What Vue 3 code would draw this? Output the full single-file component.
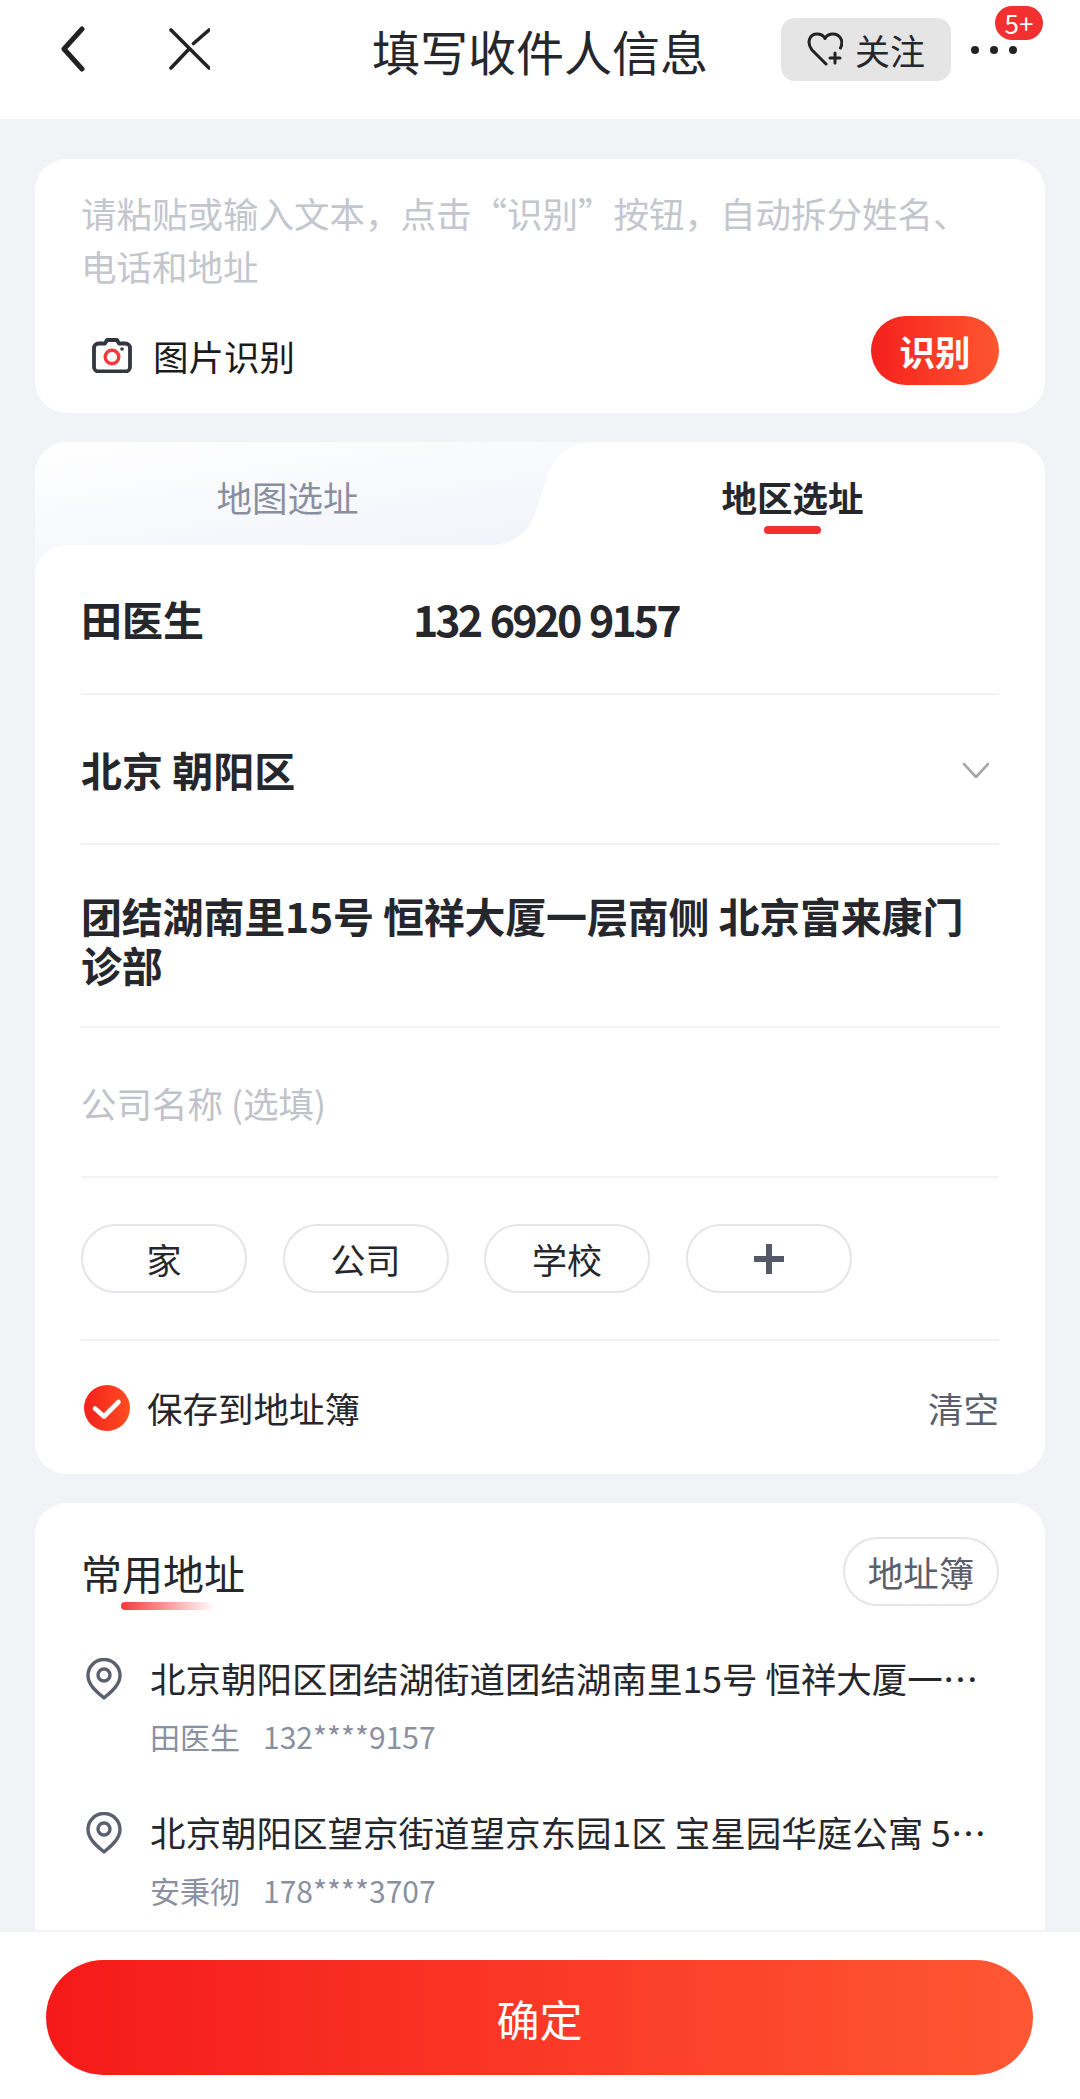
<template>
  <div class="page">
    <header class="topbar">
      <div class="nav-left">
        <svg class="icon-back" width="24" height="46" viewBox="0 0 24 46">
          <path d="M21 3 3 23l18 20" fill="none" stroke="#222" stroke-width="5" stroke-linecap="round" stroke-linejoin="round" />
        </svg>
        <svg class="icon-close" width="42" height="42" viewBox="0 0 42 42">
          <path d="M3 2 41 40M3 40 21 21M25.500 15.500 41 2" fill="none" stroke="#222" stroke-width="3.600" stroke-linecap="round" />
        </svg>
      </div>
      <h1 class="title">填写收件人信息</h1>
      <div class="nav-right">
        <div class="follow">
          <svg width="36" height="36" viewBox="0 0 36 36">
            <path d="M19 33 5 19C-1 11 3 3 10 3c3.500 0 6.500 1.500 8 4.500C19.500 4.500 22.500 3 26 3c7 0 11 7 7.500 14" fill="none" stroke="#222" stroke-width="3" stroke-linecap="round" stroke-linejoin="round" />
            <path d="M23 27h10M28 22v10" fill="none" stroke="#222" stroke-width="3" stroke-linecap="round" />
          </svg>
          <span>关注</span>
        </div>
        <div class="more">
          <i></i><i></i><i></i>
          <span class="badge">5+</span>
        </div>
      </div>
    </header>

    <main class="content">
      <section class="card paste">
        <p class="paste-hint">请粘贴或输入文本，点击“识别”按钮，自动拆分姓名、电话和地址</p>
        <div class="paste-actions">
          <div class="photo">
            <svg width="40" height="36" viewBox="0 0 40 36">
              <path d="M13 6.500 15 3h10l2 3.500h6.500a4.500 4.500 0 0 1 4.500 4.500v19a4.500 4.500 0 0 1-4.500 4.500h-27A4.500 4.500 0 0 1 2 30V11a4.500 4.500 0 0 1 4.500-4.500z" fill="none" stroke="#34363f" stroke-width="3.800" stroke-linejoin="round" />
              <circle cx="20" cy="20" r="6.800" fill="none" stroke="#f23a3a" stroke-width="3.400" />
              <circle cx="30" cy="12" r="1.800" fill="#34363f" />
            </svg>
            <span>图片识别</span>
          </div>
          <button class="recognize">识别</button>
        </div>
      </section>

      <section class="card address">
        <svg class="tab-shape" width="560" height="140" viewBox="0 0 560 140">
          <defs>
            <linearGradient id="tabFill" x1="0" y1="0" x2="0.6" y2="1">
              <stop offset="0" stop-color="#ffffff" />
              <stop offset="1" stop-color="#f1f3fa" />
            </linearGradient>
          </defs>
          <path d="M0 0H555C530 3 516 18 511 38L500 72C494 90 478 103 455 103H40V140H0Z" fill="url(#tabFill)" />
        </svg>
        <div class="tabs">
          <div class="tab">地图选址</div>
          <div class="tab active">地区选址</div>
        </div>
        <div class="form">
          <div class="row contact">
            <span class="contact-name">田医生</span>
            <span class="contact-phone">132 6920 9157</span>
          </div>
          <div class="row region">
            <span>北京 朝阳区</span>
            <svg class="chevron" width="28" height="18" viewBox="0 0 28 18">
              <path d="M2 2 14 15 26 2" fill="none" stroke="#a5a8af" stroke-width="2.600" stroke-linecap="round" stroke-linejoin="round" />
            </svg>
          </div>
          <div class="row detail">团结湖南里15号 恒祥大厦一层南侧 北京富来康门诊部</div>
          <div class="row company">公司名称 (选填)</div>
          <div class="row labels">
            <span v-for="label in labels" :key="label" class="chip">{{ label }}</span>
            <span class="chip">
              <svg width="30" height="30" viewBox="0 0 30 30">
                <path d="M0 15h30M15 0v30" stroke="#555869" stroke-width="6" />
              </svg>
            </span>
          </div>
          <div class="row save">
            <div class="save-left">
              <svg width="46" height="46" viewBox="0 0 46 46">
                <defs>
                  <linearGradient id="checkFill" x1="0" y1="0" x2="1" y2="0">
                    <stop offset="0" stop-color="#f5201c" />
                    <stop offset="1" stop-color="#ff4d22" />
                  </linearGradient>
                </defs>
                <circle cx="23" cy="23" r="23" fill="url(#checkFill)" />
                <path d="M11 23.500 20 31.500 34.500 17" fill="none" stroke="#fff" stroke-width="4.600" stroke-linecap="round" stroke-linejoin="round" />
              </svg>
              <span>保存到地址簿</span>
            </div>
            <span class="clear">清空</span>
          </div>
        </div>
      </section>

      <section class="card recent">
        <div class="recent-head">
          <h2 class="recent-title">常用地址</h2>
          <span class="book">地址簿</span>
        </div>
        <div v-for="item in recent" :key="item.phone" class="recent-item">
          <svg class="pin" width="36" height="42" viewBox="0 0 36 42">
            <path d="M18 40C11 34 2 27 2 17.500A16 16 0 0 1 34 17.500C34 27 25 34 18 40Z" fill="none" stroke="#5b5f6e" stroke-width="3.400" stroke-linejoin="round" />
            <circle cx="18" cy="17" r="6" fill="none" stroke="#5b5f6e" stroke-width="3.400" />
          </svg>
          <div class="recent-text">
            <div class="recent-addr">{{ item.address }}</div>
            <div class="recent-meta"><span>{{ item.name }}</span><span>{{ item.phone }}</span></div>
          </div>
        </div>
      </section>
    </main>

    <footer class="footer">
      <button class="confirm">确定</button>
    </footer>
  </div>
</template>

<script setup>
const labels = ['家', '公司', '学校']

const recent = [
  { address: '北京朝阳区团结湖街道团结湖南里15号 恒祥大厦一层南侧 北京富来康门诊部', name: '田医生', phone: '132****9157' },
  { address: '北京朝阳区望京街道望京东园1区 宝星园华庭公寓 5号楼2单元301室', name: '安秉彻', phone: '178****3707' },
]
</script>

<style>
body {
  margin: 0;
  background: #f2f3f7;
}
</style>

<style scoped>
.page {
  display: flex;
  flex-direction: column;
  width: 1080px;
  height: 2099px;
  overflow: hidden;
  font-family: "Noto Sans CJK SC", "Noto Sans", sans-serif;
  color: #26272c;
}

.topbar {
  flex: none;
  display: grid;
  grid-template-columns: 1fr auto 1fr;
  align-items: center;
  height: 119px;
  padding-bottom: 19px;
  box-sizing: border-box;
  background: #fff;
}
.nav-left {
  display: flex;
  align-items: center;
  margin-bottom: 2px;
  padding-left: 61px;
  gap: 83px;
}
.title {
  margin: 0;
  font-size: 48px;
  font-weight: 400;
  line-height: 70px;
}
.nav-right {
  display: flex;
  align-items: center;
  justify-content: flex-end;
  padding-right: 63px;
}
.follow {
  display: flex;
  align-items: center;
  gap: 12px;
  height: 63px;
  margin-bottom: 2px;
  padding: 0 26px;
  border-radius: 14px;
  background: #e5e5e5;
  font-size: 35px;
}
.more {
  position: relative;
  display: flex;
  gap: 11px;
  margin-left: 20px;
}
.more i {
  width: 8px;
  height: 8px;
  border-radius: 50%;
  background: #222;
}
.badge {
  position: absolute;
  left: 24px;
  top: -40px;
  width: 48px;
  height: 34px;
  border-radius: 17px;
  background: #f23030;
  color: #fff;
  font-size: 26px;
  line-height: 34px;
  text-align: center;
}

.content {
  flex: 1;
  min-height: 0;
  overflow: hidden;
  display: flex;
  flex-direction: column;
  gap: 29px;
  padding: 40px 35px 0;
}
.card {
  flex: none;
  border-radius: 32px;
  background: #fff;
}

.paste {
  display: flex;
  flex-direction: column;
  height: 254px;
  padding: 27px 46px 28px;
  box-sizing: border-box;
}
.paste-hint {
  margin: 0;
  font-size: 35.500px;
  line-height: 53px;
  color: #c3c6cd;
}
.paste-actions {
  margin-top: auto;
  display: flex;
  align-items: center;
  justify-content: space-between;
}
.photo {
  display: flex;
  align-items: center;
  gap: 21px;
  margin-top: 9px;
  padding-left: 11px;
  font-size: 35.500px;
  color: #1b1b1d;
}
.recognize {
  width: 128px;
  height: 69px;
  border: 0;
  border-radius: 35px;
  background: linear-gradient(90deg, #f5201c, #ff5630);
  color: #fff;
  font: 700 35.500px "Noto Sans CJK SC", sans-serif;
}

.address {
  position: relative;
  height: 1032px;
  overflow: hidden;
}
.tab-shape {
  position: absolute;
  left: 0;
  top: 0;
}
.tabs {
  position: relative;
  display: grid;
  grid-template-columns: 505px 505px;
  height: 103px;
}
.tab {
  padding-top: 30px;
  text-align: center;
  font-size: 35.500px;
  line-height: 50px;
  color: #8a8f9f;
}
.tab.active {
  position: relative;
  font-weight: 700;
  color: #26272c;
}
.tab.active::after {
  content: "";
  position: absolute;
  left: 224px;
  top: 84px;
  width: 57px;
  height: 8px;
  border-radius: 4px;
  background: #f23030;
}
.form {
  position: relative;
  padding: 0 46px;
  border-top-left-radius: 32px;
  background: #fff;
}
.row {
  border-bottom: 2px solid #f3f3f6;
  box-sizing: border-box;
}
.contact {
  display: flex;
  align-items: center;
  height: 150px;
  padding-bottom: 2px;
  font-size: 41px;
  font-weight: 700;
}
.contact-name {
  width: 332px;
}
.contact-phone {
  margin-bottom: 1px;
  font-size: 43px;
  letter-spacing: -3px;
  word-spacing: 3px;
}
.region {
  display: flex;
  align-items: center;
  justify-content: space-between;
  height: 150px;
  padding-right: 9px;
  font-size: 41px;
  font-weight: 700;
}
.chevron {
  margin-top: 4px;
}
.detail {
  height: 183px;
  padding-top: 46px;
  font-size: 41px;
  font-weight: 700;
  line-height: 49px;
  letter-spacing: -0.200px;
}
.company {
  display: flex;
  align-items: center;
  height: 150px;
  font-size: 35.500px;
  color: #bfc2c9;
}
.labels {
  display: flex;
  gap: 35.500px;
  height: 163px;
  padding-top: 46px;
}
.chip {
  display: flex;
  align-items: center;
  justify-content: center;
  width: 166px;
  height: 69px;
  box-sizing: border-box;
  border: 2px solid #e4e5e9;
  border-radius: 35px;
  font-size: 35px;
}
.save {
  display: flex;
  align-items: center;
  justify-content: space-between;
  height: 133px;
  border-bottom: 0;
  font-size: 35.500px;
}
.save-left {
  display: flex;
  align-items: center;
  gap: 17px;
  padding-left: 3px;
}
.clear {
  color: #5b5e6b;
}

.recent {
  padding: 34px 46px 0;
  border-radius: 32px 32px 0 0;
}
.recent-head {
  display: flex;
  align-items: center;
  justify-content: space-between;
  height: 69px;
  margin-bottom: 49px;
}
.recent-title {
  position: relative;
  margin: 0;
  font-size: 41px;
  font-weight: 400;
  line-height: 54px;
}
.recent-title::after {
  content: "";
  position: absolute;
  left: 40px;
  top: 57px;
  width: 94px;
  height: 8px;
  border-radius: 4px;
  background: linear-gradient(90deg, #f23a3a, rgba(242, 58, 58, 0));
}
.book {
  width: 156px;
  height: 69px;
  box-sizing: border-box;
  border: 2px solid #e4e5e9;
  border-radius: 35px;
  font-size: 35.500px;
  line-height: 65px;
  text-align: center;
  color: #5b5e6b;
}
.recent-item {
  display: flex;
  gap: 28px;
  height: 154px;
}
.pin {
  flex: none;
  margin-top: 3px;
  margin-left: 5px;
}
.recent-text {
  min-width: 0;
  flex: 1;
}
.recent-addr {
  overflow: hidden;
  white-space: nowrap;
  text-overflow: ellipsis;
  font-size: 35.500px;
  line-height: 46px;
}
.recent-meta {
  display: flex;
  gap: 23px;
  margin-top: 14px;
  font-size: 30px;
  line-height: 42px;
  color: #8a90a0;
}

.footer {
  flex: none;
  height: 169px;
  padding: 28px 47px 0 46px;
  box-sizing: border-box;
  border-top: 2px solid #f2f3f7;
  background: #fff;
}
.confirm {
  display: block;
  width: 100%;
  height: 115px;
  border: 0;
  border-radius: 58px;
  background: linear-gradient(90deg, #f51a1a, #ff5733);
  color: #fff;
  font: 400 43px "Noto Sans CJK SC", sans-serif;
}
</style>
